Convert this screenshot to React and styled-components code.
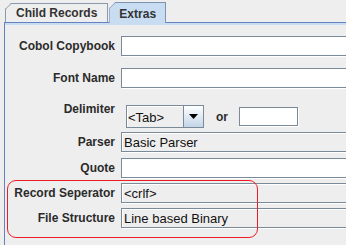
import React from 'react';
import styled, { createGlobalStyle } from 'styled-components';

const Global = createGlobalStyle`
  body {
    margin: 0;
    background: #eeeeee;
    font-family: "Liberation Sans", Arial, sans-serif;
  }
`

const Window = styled.div`
  position: relative;
  width: 346px;
  height: 245px;
  overflow: hidden;
  background: #eeeeee;
`

const TabStrip = styled.div`
  display: flex;
  align-items: flex-end;
  height: 22px;
  padding-left: 5px;
`

const Tab = styled.div`
  position: relative;
  box-sizing: border-box;
  height: ${p => p.$selected ? 21 : 19}px;
  margin-bottom: ${p => p.$selected ? -1 : 0}px;
  margin-left: ${p => p.$selected ? 1 : 0}px;
  z-index: ${p => p.$selected ? 1 : 0};
  padding: ${p => p.$selected ? '2px 9px 0 9px' : '0 10px'};
  display: flex;
  align-items: center;
  border: 1px solid ${p => p.$selected ? '#7f93b3' : '#8a99ad'};
  border-bottom: none;
  background: ${p => p.$selected ? '#c8ddf2' : '#eeeeee'};
  clip-path: polygon(6px 0, 100% 0, 100% 100%, 0 100%, 0 6px);
  font: bold 12px "Liberation Sans", Arial, sans-serif;
  color: #333;

  &::before {
    content: '';
    position: absolute;
    left: -1px;
    top: 5px;
    width: 8.5px;
    height: 1px;
    background: ${p => p.$selected ? '#7f93b3' : '#8a99ad'};
    transform-origin: 0 50%;
    transform: rotate(-45deg);
  }
`

const Panel = styled.div`
  margin-left: 4px;
  width: 420px;
  height: 260px;
  border-top: 1px solid #6382bf;
  border-left: 1px solid #6382bf;
  box-shadow: inset 0 2px 0 #c8ddf2;
`

const Form = styled.div`
  display: flex;
  flex-direction: column;
  padding-top: 13px;
`

const Row = styled.div`
  display: flex;
  align-items: ${p => p.$top ? 'flex-start' : 'center'};
  margin-top: ${p => p.$gap || 0}px;
`

const Label = styled.div`
  flex: none;
  width: 110px;
  margin-right: 6px;
  text-align: right;
  font: bold 12px/14px "Liberation Sans", Arial, sans-serif;
  color: #2b2b2b;
`

const Field = styled.div`
  box-sizing: border-box;
  flex: ${p => p.$width ? 'none' : 1};
  width: ${p => p.$width ? p.$width + 'px' : 'auto'};
  height: ${p => p.$height || 20}px;
  padding: 1px 0 0 2px;
  display: flex;
  align-items: center;
  border: 1px solid #7a8a99;
  background: ${p => p.$readOnly ? '#eeeeee' : '#ffffff'};
  box-shadow: inset 1px 1px 0 #ffffff, 1px 1px 0 #ffffff;
  font: 13px "Liberation Sans", Arial, sans-serif;
  color: #111;
  white-space: nowrap;
`

const DelimiterGroup = styled.div`
  display: flex;
  align-items: center;
  margin: 3px 0 0 5px;
`

const Combo = styled.div`
  box-sizing: border-box;
  display: flex;
  width: 78px;
  height: 23px;
  border: 1px solid #7a8a99;
  background: #eeeeee;
`

const ComboValue = styled.div`
  flex: 1;
  display: flex;
  align-items: center;
  padding: 1px 0 0 1px;
  box-shadow: inset 1px 1px 0 #ffffff;
  font: 13px "Liberation Sans", Arial, sans-serif;
  color: #111;
`

const ComboButton = styled.div`
  flex: none;
  width: 19px;
  display: flex;
  align-items: center;
  justify-content: center;
  border-left: 1px solid #7a8a99;
  background: linear-gradient(#ffffff, #c3d5e8);
`

const OrText = styled.span`
  margin: 0 11px 0 12px;
  font: bold 12px/14px "Liberation Sans", Arial, sans-serif;
  color: #2b2b2b;
`

const Highlight = styled.div`
  position: absolute;
  left: 7px;
  top: 180px;
  width: 251px;
  height: 58px;
  box-sizing: border-box;
  border: 1px solid #ee1c24;
  border-radius: 9px;
  pointer-events: none;
`

const rows = [
  { label: 'Parser', value: 'Basic Parser', readOnly: true, gap: 4 },
  { label: 'Quote', value: '', gap: 6 },
  { label: 'Record Seperator', value: '<crlf>', readOnly: true, gap: 5 },
  { label: 'File Structure', value: 'Line based Binary', readOnly: true, gap: 5 },
]

const App = () => {
  return (
    <>
      <Global />
      <Window>
        <TabStrip>
          <Tab>Child Records</Tab>
          <Tab $selected>Extras</Tab>
        </TabStrip>
        <Panel>
          <Form>
            <Row>
              <Label>Cobol Copybook</Label>
              <Field />
            </Row>
            <Row $gap={12}>
              <Label>Font Name</Label>
              <Field />
            </Row>
            <Row $gap={14} $top>
              <Label>Delimiter</Label>
              <DelimiterGroup>
                <Combo>
                  <ComboValue>&lt;Tab&gt;</ComboValue>
                  <ComboButton>
                    <svg width="9" height="5" viewBox="0 0 9 5">
                      <path d="M0 0h9L4.5 5z" fill="#000" />
                    </svg>
                  </ComboButton>
                </Combo>
                <OrText>or</OrText>
                <Field $width={59} $height={19} />
              </DelimiterGroup>
            </Row>
            {rows.map(r => (
              <Row key={r.label} $gap={r.gap}>
                <Label>{r.label}</Label>
                <Field $readOnly={r.readOnly}>{r.value}</Field>
              </Row>
            ))}
          </Form>
        </Panel>
        <Highlight />
      </Window>
    </>
  )
}

export default App;
